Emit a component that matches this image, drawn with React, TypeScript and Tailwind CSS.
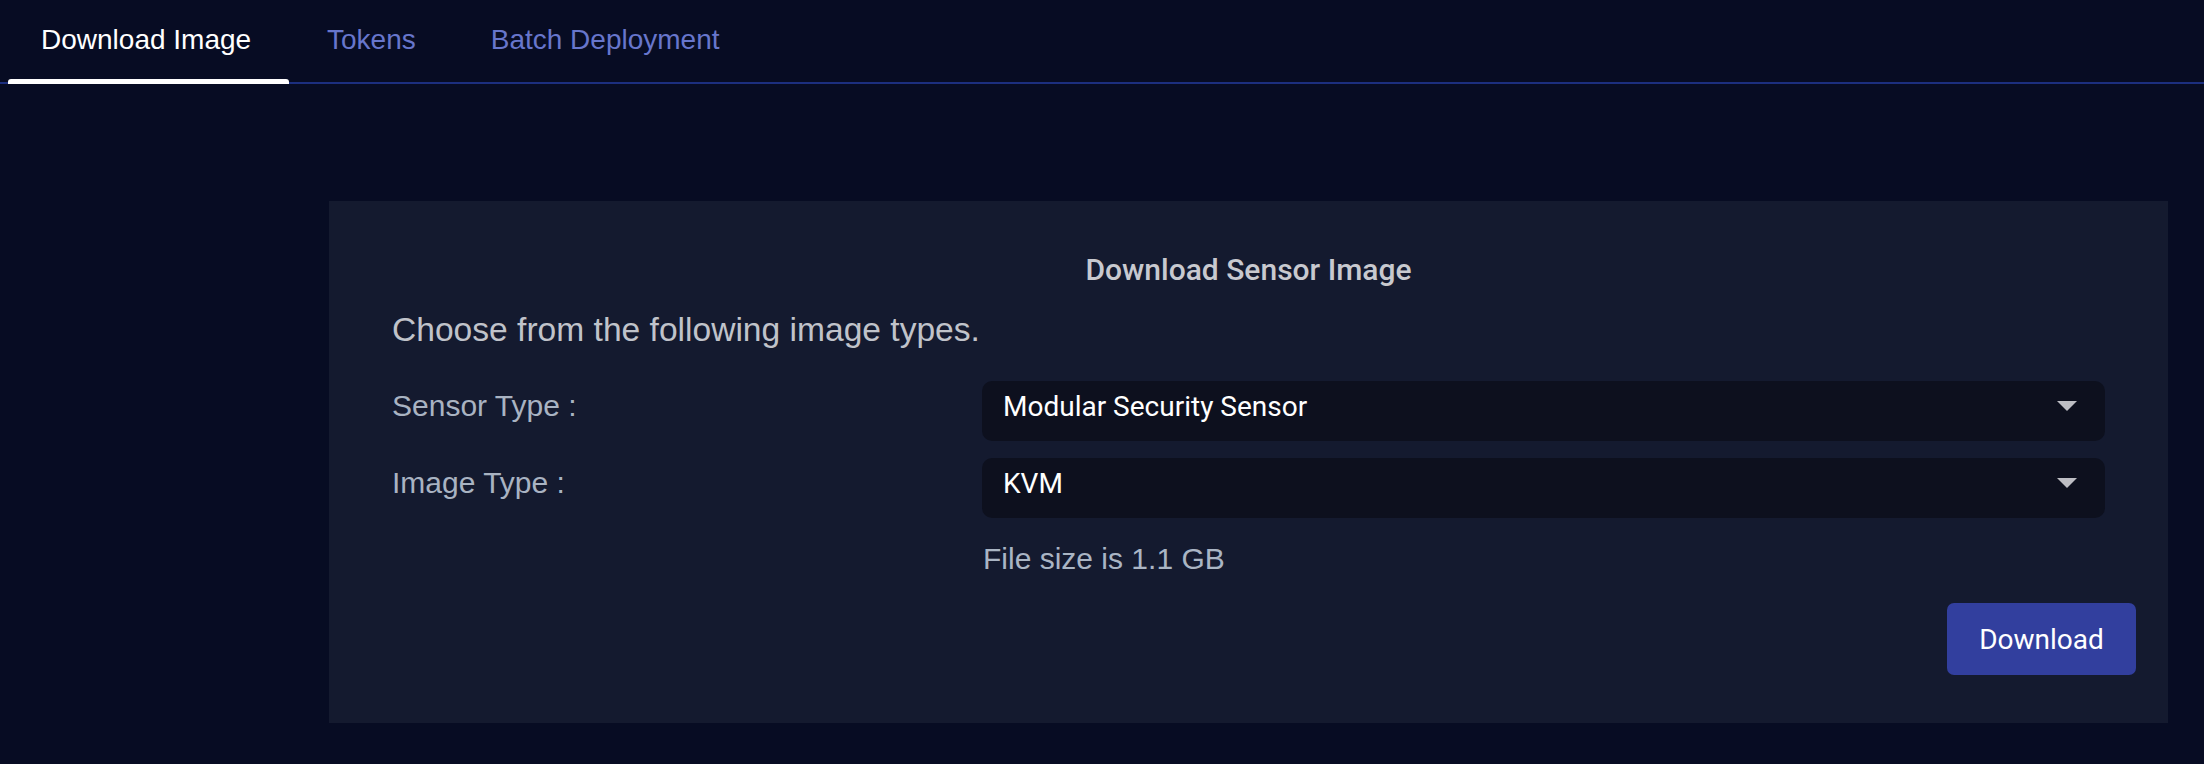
import React from 'react';

const tabs = ['Download Image', 'Tokens', 'Batch Deployment'];

const Caret: React.FC = () => (
  <svg width="20" height="10" viewBox="0 0 20 10" className="mt-[20px] shrink-0">
    <polygon points="0,0 20,0 10,10" fill="#bdbec4" />
  </svg>
);

const SelectBox: React.FC<{ value: string }> = ({ value }) => (
  <div className="flex h-[60px] items-start justify-between rounded-[10px] bg-[#0d101e] pl-[21px] pr-[28px]">
    <span className="pt-[9px] font-['Roboto',sans-serif] text-[28px] leading-[33px] text-white">{value}</span>
    <Caret />
  </div>
);

const App: React.FC = () => {
  return (
    <div className="min-h-screen bg-[#070c23] font-['Liberation_Sans',Arial,sans-serif]">
      <nav className="flex h-[84px] border-b-2 border-[#1c2f7f] pl-[8px]">
        <div className="relative w-[281px] pl-[33px] pt-[24px] text-[28px] leading-[32px] text-white">
          {tabs[0]}
          <div className="absolute bottom-[-2px] left-0 h-[5px] w-full rounded-t-[3px] bg-white" />
        </div>
        <div className="px-[38px] pt-[24px] text-[28px] leading-[32px] text-[#6776cc]">{tabs[1]}</div>
        <div className="pl-[37px] pt-[24px] text-[28px] leading-[32px] text-[#6776cc]">{tabs[2]}</div>
      </nav>

      <section className="ml-[329px] mr-[36px] mt-[117px] bg-[#141a2f] px-[63px] pb-[48px] pt-[51px]">
        <h2 className="text-center font-['Roboto',sans-serif] text-[30px] font-medium leading-[36px] text-[#c8c9cf]">
          Download Sensor Image
        </h2>
        <p className="mt-[22px] text-[33.6px] leading-[40px] text-[#c0c3ca]">Choose from the following image types.</p>

        <div className="mt-[31px] flex flex-col gap-[17px]">
          <div className="flex items-baseline">
            <label className="w-[590px] shrink-0 text-[30px] leading-[34px] text-[#a9b3c2]">Sensor Type :</label>
            <div className="flex-1">
              <SelectBox value="Modular Security Sensor" />
            </div>
          </div>
          <div className="flex items-baseline">
            <label className="w-[590px] shrink-0 text-[30px] leading-[34px] text-[#a9b3c2]">Image Type :</label>
            <div className="flex-1">
              <SelectBox value="KVM" />
            </div>
          </div>
        </div>

        <p className="ml-[591px] mt-[24px] text-[30px] leading-[34px] text-[#aab5c4]">File size is 1.1 GB</p>

        <div className="-mr-[31px] mt-[27px] flex justify-end">
          <button className="h-[72px] w-[189px] rounded-[7px] bg-[#323f9e] font-['Roboto',sans-serif] text-[28px] leading-[33px] text-white">
            Download
          </button>
        </div>
      </section>
    </div>
  );
};

export default App;
